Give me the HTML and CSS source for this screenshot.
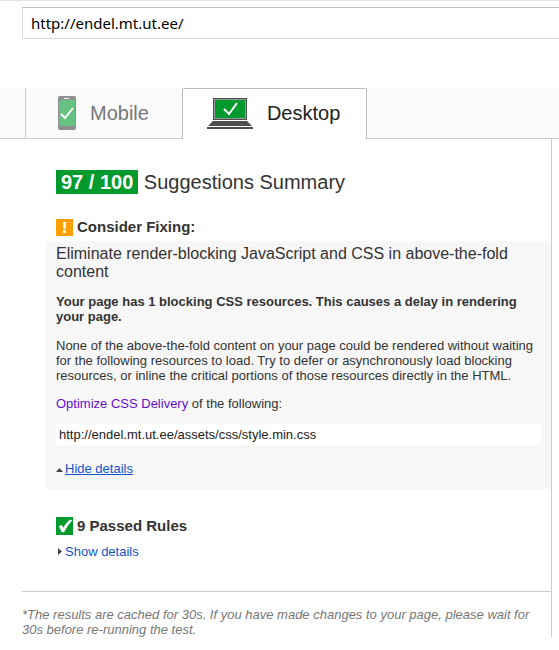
FILE: index.html
```html
<!DOCTYPE html>
<html lang="en">
<head>
<meta charset="utf-8">
<title>Page speed results</title>
<link rel="stylesheet" href="styles.css">
</head>
<body>
<header class="search">
  <input class="url-input" type="text" value="http://endel.mt.ut.ee/" aria-label="Web page URL">
</header>
<nav class="tabs">
  <button class="tab" type="button">
    <svg width="18" height="34" viewBox="0 0 18 34" aria-hidden="true">
      <rect width="18" height="34" rx="2" fill="#8f8f8f"/>
      <rect x="6" y="2" width="5" height="1" fill="#fff"/>
      <rect x="1" y="4" width="16" height="26" fill="#65c283"/>
      <path d="M3 18l4 4 8-10" fill="none" stroke="#fff" stroke-width="2"/>
    </svg>
    <span>Mobile</span>
  </button>
  <button class="tab tab-active" type="button">
    <svg width="46" height="31" viewBox="0 0 46 31" aria-hidden="true">
      <rect x="6" width="34" height="22" fill="#4d4d4d"/>
      <rect x="7" y="1" width="32" height="20" fill="#999"/>
      <rect x="8" y="2" width="30" height="18" fill="#009a2d"/>
      <path d="M17 11l5 5 8-11" fill="none" stroke="#fff" stroke-width="2"/>
      <path d="M6 23h34l5 5H1z" fill="#4d4d4d"/>
      <path d="M0 29h46v2H0z" fill="#4d4d4d"/>
    </svg>
    <span>Desktop</span>
  </button>
</nav>
<main class="results">
  <div class="content">
    <h1 class="summary"><span class="score">97 / 100</span> Suggestions Summary</h1>
    <h2 class="group">
      <svg width="17" height="17" viewBox="0 0 17 17" aria-hidden="true">
        <rect width="17" height="17" fill="#ffa000"/>
        <path d="M7 3h3l-.5 7h-2zM7 11h3v3H7z" fill="#fff"/>
      </svg>
      Consider Fixing:
    </h2>
    <section class="rule">
      <h3 class="rule-title">Eliminate render-blocking JavaScript and CSS in above-the-fold content</h3>
      <p class="text strong">Your page has 1 blocking CSS resources. This causes a delay in rendering your page.</p>
      <p class="text">None of the above-the-fold content on your page could be rendered without waiting for the following resources to load. Try to defer or asynchronously load blocking resources, or inline the critical portions of those resources directly in the HTML.</p>
      <p class="text"><a class="visited" href="#optimize">Optimize CSS Delivery</a> of the following:</p>
      <div class="resource">http://endel.mt.ut.ee/assets/css/style.min.css</div>
      <a class="toggle" href="#details">
        <svg width="9" height="15" viewBox="0 0 9 15" aria-hidden="true"><path d="M0 11l3.500-4 3.500 4z" fill="#444"/></svg><span class="underlined">Hide details</span>
      </a>
    </section>
    <h2 class="group passed">
      <svg width="17" height="18" viewBox="0 0 17 18" aria-hidden="true">
        <rect width="17" height="18" fill="#009a2d"/>
        <path d="M3 9.500L5.500 8l2 3C9 8 11 5 14 3L16 3.500C12.500 7 10.500 10 8 15H6z" fill="#fff" stroke="#fff" stroke-width=".5"/>
      </svg>
      9 Passed Rules
    </h2>
    <a class="toggle toggle-closed" href="#passed">
      <svg width="9" height="15" viewBox="0 0 9 15" aria-hidden="true"><path d="M2 4l4 3.500-4 3.500z" fill="#444"/></svg><span>Show details</span>
    </a>
  </div>
  <p class="note">*The results are cached for 30s. If you have made changes to your page, please wait for 30s before re-running the test.</p>
</main>
</body>
</html>
```
FILE: styles.css
```css
* {
  box-sizing: border-box;
}

body {
  margin: 0;
  border-top: 1px solid #e5e5e5;
  background: #fff;
  color: #333;
  font: 13px/15px "Liberation Sans", Arial, sans-serif;
}

h1, h2, h3, p {
  margin: 0;
}

a {
  color: #15c;
  text-decoration: none;
}

.search {
  padding: 6px 0 0 22px;
}

.url-input {
  display: block;
  width: 100%;
  height: 32px;
  padding: 0 8px;
  border: 1px solid #d9d9d9;
  border-top-color: #c0c0c0;
  border-right: 0;
  background: #fff;
  color: #000;
  font: 15px "Noto Sans", sans-serif;
}

.tabs {
  display: flex;
  margin-top: 49px;
  padding-left: 25px;
  border-bottom: 1px solid #ccc;
  background: #fafafa;
}

.tab {
  display: flex;
  align-items: center;
  height: 50px;
  gap: 14px;
  padding: 0 33px 0 32px;
  border: 0;
  border-left: 1px solid #ccc;
  background: none;
  color: #777;
  font: 20px "Liberation Sans", Arial, sans-serif;
}

.tab-active {
  height: 51px;
  margin-bottom: -1px;
  padding: 0 26px 2px 24px;
  border: 1px solid #bbb;
  border-bottom: 0;
  border-radius: 2px 2px 0 0;
  background: #fff;
  color: #222;
}

.results {
  margin-right: 7px;
  border-right: 1px solid #ccc;
}

.content {
  padding: 31px 0 0 46px;
}

.summary {
  padding-left: 10px;
  font-size: 20px;
  font-weight: 400;
  line-height: 24px;
}

.score {
  display: inline-block;
  padding: 0 5px;
  background: #009a2d;
  color: #fff;
  font-weight: 700;
}

.group {
  display: flex;
  align-items: center;
  gap: 4px;
  margin-top: 24px;
  padding-left: 10px;
  font-size: 15px;
  line-height: 18px;
}

.rule {
  margin-top: 5px;
  padding: 4px 10px 13px;
  background: #f7f7f7;
}

.rule-title {
  font-size: 16px;
  font-weight: 400;
  line-height: 18px;
}

.text {
  margin-top: 13px;
}

.strong {
  padding-bottom: 1px;
  font-weight: 700;
}

.visited {
  color: #61c;
}

.resource {
  margin: 13px 0 16px;
  padding: 3px;
  background: #fff;
  color: #222;
}

.toggle {
  display: flex;
}

.underlined {
  text-decoration: underline;
}

.passed {
  margin-top: 28px;
}

.toggle-closed {
  margin-top: 9px;
  padding-left: 10px;
}

.note {
  margin: 32px 0 0 22px;
  padding: 15px 10px 0 0;
  border-top: 1px solid #ccc;
  color: #777;
  font-style: italic;
}
```
